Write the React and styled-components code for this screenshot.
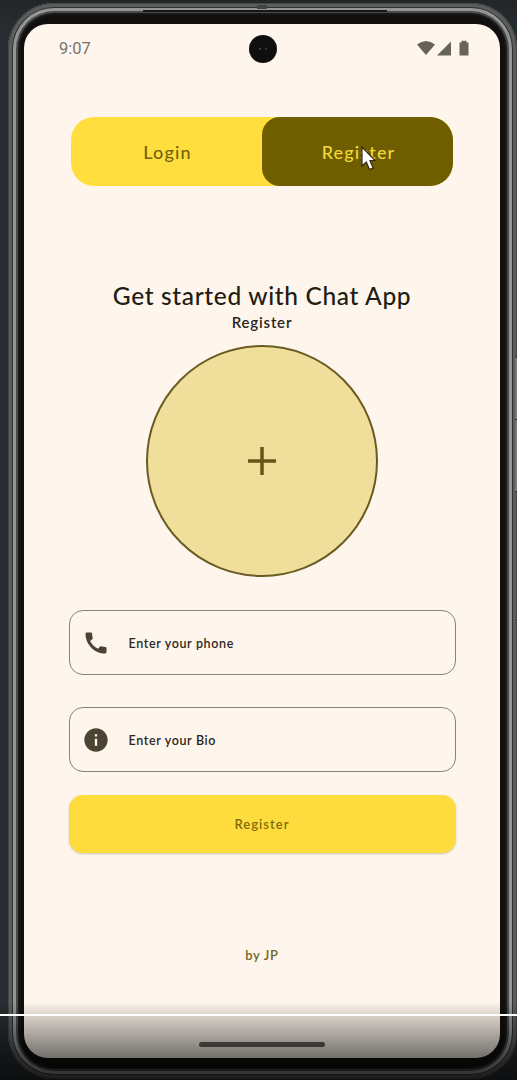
import React from "react";
import styled, { createGlobalStyle } from "styled-components";
import { MdCall, MdInfo } from "react-icons/md";

const Global = createGlobalStyle`
  * { box-sizing: border-box; }
  body { margin: 0; background: #282d31; overflow: hidden; }
`;

const Stage = styled.main`
  position: relative;
  width: 517px;
  height: 1080px;
  padding: 3px 0 0 8px;
  overflow: hidden;
  background: linear-gradient(#222629 0, #282d31 30px);
  font-family: Lato, "Open Sans", sans-serif;
`;

const Device = styled.div`
  width: 509px;
  height: 1076px;
  padding: 21px 17px 21px 16px;
  border-radius: 46px;
  background: #100f0e;
  box-shadow:
    inset 0 0 0 1px #454747,
    inset 0 0 0 4px #5c5e5e,
    inset 0 0 0 5px #303131,
    inset 0 0 0 8px #949595,
    inset 0 0 0 10px #484949,
    inset 0 0 3px 11px #242322;
`;

const Screen = styled.div`
  display: flex;
  flex-direction: column;
  align-items: center;
  width: 476px;
  height: 1034px;
  border-radius: 24px;
  background: #fef6ec;
`;

const StatusBar = styled.header`
  display: grid;
  grid-template-columns: 1fr 28px 1fr;
  align-items: center;
  width: 100%;
  height: 50px;
  padding: 0 31px 0 35px;
`;

const Clock = styled.time`
  font: 400 16.5px/20px Roboto, sans-serif;
  color: #77736c;
`;

const Camera = styled.div`
  display: flex;
  align-items: center;
  justify-content: center;
  gap: 4px;
  width: 28px;
  height: 28px;
  margin-left: -1px;
  border-radius: 50%;
  background: #100f10;
`;

const Lens = styled.i`
  width: 2px;
  height: 2px;
  border-radius: 50%;
  background: ${(p) => p.$color};
`;

const StatusIcons = styled.svg`
  justify-self: end;
  width: 52px;
  height: 16px;
  margin-top: -2px;
  fill: #66635b;
`;

const Tabs = styled.nav`
  display: flex;
  width: 382px;
  height: 69px;
  margin: 43px 0 0;
  border-radius: 23px;
  background: #ffde3e;
`;

const Tab = styled.button`
  flex: 1;
  padding: 0 0 0 2px;
  border: 0;
  border-radius: ${(p) => (p.$active ? "18px 23px 23px 18px" : "23px")};
  background: ${(p) => (p.$active ? "#6e5e00" : "transparent")};
  color: ${(p) => (p.$active ? "#f6d83a" : "#75620a")};
  font: 500 18px/24px Lato, sans-serif;
  letter-spacing: 1.15px;
`;

const Title = styled.h1`
  margin: 95px 0 0;
  color: #211d14;
  font: 500 24.5px/30px Lato, sans-serif;
  letter-spacing: 0.65px;
  white-space: nowrap;
`;

const Subtitle = styled.p`
  margin: 2px 0 0;
  color: #29241b;
  font: 600 15px/18px Lato, sans-serif;
  letter-spacing: 0.8px;
`;

const AvatarPicker = styled.button`
  display: flex;
  align-items: center;
  justify-content: center;
  flex: none;
  width: 232px;
  height: 232px;
  margin-top: 14px;
  padding: 0;
  border: 2px solid #6a5b22;
  border-radius: 50%;
  background: #f0df9a;
`;

const PlusIcon = styled.svg`
  width: 28px;
  height: 28px;
  stroke: #65571c;
  stroke-width: 3.5;
`;

const Form = styled.form`
  display: flex;
  flex-direction: column;
  width: 387px;
  margin-top: 33px;
`;

const Field = styled.label`
  display: flex;
  align-items: center;
  gap: 19px;
  height: 65px;
  margin-bottom: ${(p) => p.$gap}px;
  padding-left: 12px;
  border: 1px solid #88837a;
  border-radius: 14px;
  color: #2c261e;
  font: 600 12.5px/18px Lato, sans-serif;
  letter-spacing: 0.65px;

  svg { color: #4b4434; }
`;

const FieldText = styled.span`
  padding-top: 2px;
`;

const Submit = styled.button`
  height: 58px;
  border: 0;
  border-radius: 14px;
  background: #ffdc3d;
  box-shadow: 0 1px 2px #a59b8188;
  color: #806c09;
  font: 600 13px/18px Lato, sans-serif;
  letter-spacing: 1.05px;
`;

const Credit = styled.footer`
  margin-top: 93px;
  color: #70672b;
  font: 600 13px/18px Lato, sans-serif;
  letter-spacing: 0.7px;
`;

const HomeBar = styled.div`
  width: 126px;
  height: 5px;
  margin: auto 0 11px;
  border-radius: 3px;
  background: #64625d;
`;

const PlayerScrim = styled.div`
  position: absolute;
  inset: 1002px 0 0;
  background: linear-gradient(
    #0000 0,
    #00000022 12px,
    #0000002a 15px,
    #0000008c 56px,
    #000000b0 78px
  );
`;

const ProgressLine = styled.div`
  height: 2px;
  margin-top: 12px;
  background: #fff;
`;

const Seam = styled.i`
  position: absolute;
  top: 10px;
  left: ${(p) => p.$left}px;
  width: ${(p) => p.$width}px;
  height: 2px;
  background: #171717;
`;

const AntennaGap = styled.i`
  position: absolute;
  top: 5px;
  left: 257px;
  width: 10px;
  height: 4px;
  background: #424242;
`;

const SideButton = styled.i`
  position: absolute;
  top: ${(p) => p.$top}px;
  right: 0;
  width: 2px;
  height: ${(p) => p.$height}px;
  border: solid #333;
  border-width: 1px 0;
  background: #787878;
`;

const Cursor = styled.svg`
  position: absolute;
  left: 361px;
  top: 146px;
  width: 15px;
  height: 25px;
`;

export default function App() {
  return (
    <Stage>
      <Global />
      <Device>
        <Screen>
          <StatusBar>
            <Clock>9:07</Clock>
            <Camera>
              <Lens $color="#405052" />
              <Lens $color="#414060" />
            </Camera>
            <StatusIcons viewBox="0 0 52 16">
              <path d="M0 4.5Q9 -2.5 18 4.5L9 15Z" />
              <path d="M20 15.5 34 1.5v14Z" />
              <path d="M42.500 2.500h2V.8h5v1.700h2v13h-9Z" />
            </StatusIcons>
          </StatusBar>
          <Tabs>
            <Tab type="button">Login</Tab>
            <Tab type="button" $active>Register</Tab>
          </Tabs>
          <Title>Get started with Chat App</Title>
          <Subtitle>Register</Subtitle>
          <AvatarPicker type="button" aria-label="Add photo">
            <PlusIcon viewBox="0 0 28 28">
              <path d="M14 0v28M0 14h28" />
            </PlusIcon>
          </AvatarPicker>
          <Form>
            <Field $gap={32}>
              <MdCall size={28} />
              <FieldText>Enter your phone</FieldText>
            </Field>
            <Field $gap={23}>
              <MdInfo size={28} />
              <FieldText>Enter your Bio</FieldText>
            </Field>
            <Submit type="button">Register</Submit>
          </Form>
          <Credit>by JP</Credit>
          <HomeBar />
        </Screen>
      </Device>
      <AntennaGap />
      <Seam $left={143} $width={244} />
      <SideButton $top={357} $height={64} />
      <SideButton $top={419} $height={73} />
      <SideButton $top={617} $height={3} />
      <Cursor viewBox="0 0 15 25">
        <path
          d="M1 1v19l4.300-4 3.200 7.500 3.600-1.600L9 14.500h5Z"
          fill="#fff"
          stroke="#302a18"
          strokeWidth="1.200"
        />
      </Cursor>
      <PlayerScrim>
        <ProgressLine />
      </PlayerScrim>
    </Stage>
  );
}
